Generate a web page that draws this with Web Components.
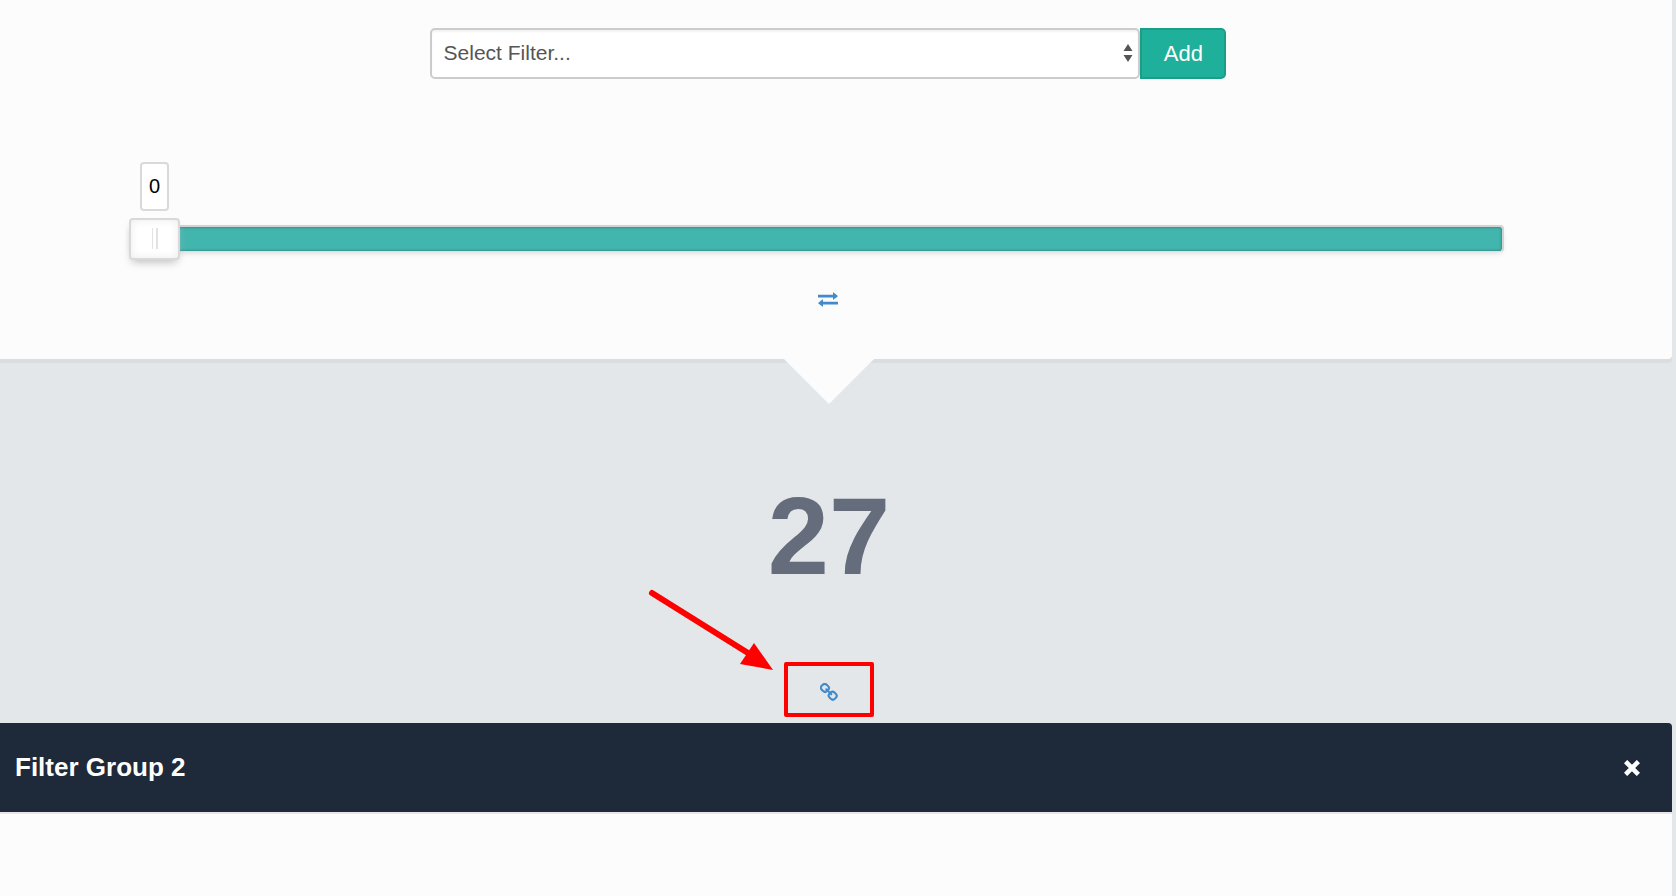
<!DOCTYPE html>
<html lang="en">
<head>
<meta charset="utf-8">
<title>Filter Group 2</title>
<style>
  body {
    margin: 0;
    padding-right: 4px;
    min-height: 100vh;
    box-sizing: border-box;
    display: flex;
    flex-direction: column;
    background: #e3e7ea;
    font-family: "Liberation Sans", Arial, sans-serif;
    color: #555;
  }

  group-body {
    flex: 1;
  }
</style>
</head>
<body>
  <filter-panel>
    <filter-picker placeholder="Select Filter..."></filter-picker>
    <value-slider value="0"></value-slider>
    <swap-link></swap-link>
  </filter-panel>
  <result-count>
    <span>27</span>
    <callout-box slot="action"><chain-link></chain-link></callout-box>
  </result-count>
  <group-header>Filter Group 2</group-header>
  <group-body></group-body>

<script>
class BaseElement extends HTMLElement {
  constructor() {
    super();
    this.attachShadow({mode: 'open'});
  }

  connectedCallback() {
    this.shadowRoot.innerHTML = this.render();
  }
}

class FilterPanel extends BaseElement {
  render() {
    return `
      <style>
        :host {
          display: flex;
          flex-direction: column;
          position: relative;
          padding: 28px 0 49px;
          background: #fcfcfc;
          border-bottom-right-radius: 4px;
          box-shadow: 0 4px 0 #dadee1;
        }

        .notch {
          position: absolute;
          top: 100%;
          left: calc(50% - 52px);
          width: 90px;
          height: 45px;
          background: #fcfcfc;
          clip-path: polygon(0 0, 100% 0, 50% 100%);
        }
      </style>
      <slot></slot>
      <div class="notch"></div>
    `;
  }
}

class FilterPicker extends BaseElement {
  render() {
    return `
      <style>
        :host {
          display: flex;
          justify-content: center;
          padding-right: 16px;
        }

        form {
          display: flex;
          width: calc(48% + 2px);
          height: 51px;
          margin: 0;
        }

        .field {
          display: flex;
          flex: 1;
          position: relative;
        }

        select {
          appearance: none;
          flex: 1;
          min-width: 0;
          margin: 0;
          padding: 0 32px 3px 12px;
          border: 2px solid #ccc;
          border-radius: 5px;
          background: #fff;
          box-shadow: inset 0 2px 2px rgba(0, 0, 0, 0.05);
          color: #555;
          font-family: inherit;
          font-size: 21px;
        }

        svg {
          position: absolute;
          top: 15px;
          right: 7px;
          pointer-events: none;
        }

        button {
          width: 86px;
          padding: 0;
          border: 2px solid #1a9e87;
          border-radius: 0 5px 5px 0;
          background: #1eb09a;
          color: #fff;
          font-family: inherit;
          font-size: 22px;
          cursor: pointer;
        }
      </style>
      <form onsubmit="return false">
        <div class="field">
          <select aria-label="Filter">
            <option>${this.getAttribute('placeholder')}</option>
          </select>
          <svg width="10" height="20" fill="#555" aria-hidden="true">
            <path d="M5 1L9.5 8H.5ZM.5 12H9.5L5 19Z"/>
          </svg>
        </div>
        <button type="submit">Add</button>
      </form>
    `;
  }
}

class ValueSlider extends BaseElement {
  render() {
    return `
      <style>
        :host {
          display: flex;
          flex-direction: column;
          align-items: flex-start;
          gap: 6px;
          padding: 83px 168px 0 129px;
        }

        output {
          box-sizing: border-box;
          min-width: 29px;
          margin-left: 11px;
          padding: 0 6px;
          border: 2px solid #d9d9d9;
          border-radius: 4px;
          background: #fff;
          color: #000;
          font-size: 20px;
          line-height: 45px;
          text-align: center;
        }

        input {
          appearance: none;
          display: block;
          width: 100%;
          height: 42px;
          margin: 0;
          background: none;
        }

        input::-webkit-slider-runnable-track {
          box-sizing: border-box;
          height: 27px;
          border: 2px solid #d3d3d3;
          border-bottom: 1px solid #d9e3e2;
          border-radius: 4px;
          background: #42b5ae;
          background-clip: padding-box;
          box-shadow: inset 0 0 3px rgba(0, 0, 0, 0.4), 0 3px 6px -3px #ccc;
        }

        input::-webkit-slider-thumb {
          appearance: none;
          box-sizing: border-box;
          width: 51px;
          height: 42px;
          margin: -9px 0 0 -2px;
          border: 2px solid #d9d9d9;
          border-radius: 4px;
          background:
            linear-gradient(#e3e3e3, #e3e3e3) 21px center / 1px 21px no-repeat,
            linear-gradient(#e3e3e3, #e3e3e3) 25px center / 2px 21px no-repeat,
            #fff;
          box-shadow: inset 0 0 8px #ebebeb, 0 5px 9px -3px #bbb;
          cursor: pointer;
        }
      </style>
      <output for="range">${this.getAttribute('value')}</output>
      <input id="range" type="range" min="0" max="100" aria-label="Value" value="${this.getAttribute('value')}">
    `;
  }

  connectedCallback() {
    super.connectedCallback();
    const input = this.shadowRoot.querySelector('input');
    input.addEventListener('input', () => {
      this.shadowRoot.querySelector('output').textContent = input.value;
    });
  }
}

class SwapLink extends BaseElement {
  render() {
    return `
      <style>
        :host {
          display: flex;
          justify-content: center;
          padding: 33px 16px 0 0;
        }

        a, svg {
          display: block;
        }
      </style>
      <a href="#" aria-label="Swap">
        <svg width="20" height="18" fill="#428bca">
          <path d="M0 2.8H15V.8Q15 .2 15.6 .6L19.6 3.7Q20 4.1 19.6 4.5L15.6 7.6Q15 8 15 7.4V5.4H0ZM20 9.8H5V7.8Q5 7.2 4.4 7.6L.4 10.7Q0 11.1 .4 11.5L4.4 14.6Q5 15 5 14.4V12.4H20Z"/>
        </svg>
      </a>
    `;
  }
}

class ResultCount extends BaseElement {
  render() {
    return `
      <style>
        :host {
          display: flex;
          flex-direction: column;
          align-items: center;
          padding: 114px 14px 6px 0;
          color: #656d7d;
        }

        .number {
          margin-bottom: 63px;
          font-size: 110px;
          font-weight: bold;
          line-height: 126px;
        }
      </style>
      <div class="number"><slot></slot></div>
      <slot name="action"></slot>
    `;
  }
}

class CalloutBox extends BaseElement {
  render() {
    return `
      <style>
        :host {
          display: block;
          position: relative;
        }

        .frame {
          display: flex;
          align-items: center;
          justify-content: center;
          box-sizing: border-box;
          width: 90px;
          height: 55px;
          padding-top: 5px;
          border: 4px solid #f00;
          border-radius: 2px;
        }

        svg {
          position: absolute;
          top: -82px;
          left: -144px;
        }
      </style>
      <div class="frame"><slot></slot></div>
      <svg width="140" height="100" aria-hidden="true">
        <path d="M12 13L108 73" stroke="#f00" stroke-width="6" stroke-linecap="round"/>
        <path d="M114 63L133 90L100 84Z" fill="#f00"/>
      </svg>
    `;
  }
}

class ChainLink extends BaseElement {
  render() {
    return `
      <style>
        :host, a, svg {
          display: block;
        }
      </style>
      <a href="#" aria-label="Link groups">
        <svg width="18" height="18" fill="none" stroke="#428bca" stroke-width="2.1">
          <rect x="-3.7" y="-3.5" width="7.4" height="7" rx="2.7" transform="translate(4.9 4.9) rotate(45)"/>
          <rect x="-3.7" y="-3.5" width="7.4" height="7" rx="2.7" transform="translate(12.7 12.7) rotate(45)"/>
          <path d="M6.3 6.3L11.3 11.3" stroke-linecap="round"/>
        </svg>
      </a>
    `;
  }
}

class GroupHeader extends BaseElement {
  render() {
    return `
      <style>
        :host {
          display: flex;
          align-items: center;
          justify-content: space-between;
          padding: 0 32px 0 15px;
          border-top-right-radius: 4px;
          background: #1e2939;
          color: #fff;
        }

        h2 {
          margin: 0;
          font-size: 26px;
          font-weight: bold;
          line-height: 89px;
        }

        button {
          display: block;
          padding: 0;
          border: 0;
          background: none;
          cursor: pointer;
        }

        svg {
          display: block;
        }
      </style>
      <h2><slot></slot></h2>
      <button type="button" aria-label="Remove group">
        <svg width="16" height="16">
          <path d="M3.2 3.2L12.8 12.8M12.8 3.2L3.2 12.8" stroke="#fff" stroke-width="4.6" stroke-linecap="square"/>
        </svg>
      </button>
    `;
  }
}

class GroupBody extends BaseElement {
  render() {
    return `
      <style>
        :host {
          display: block;
          min-height: 80px;
          border-top: 2px solid #e7e7ea;
          background: #fcfcfc;
        }
      </style>
      <slot></slot>
    `;
  }
}

customElements.define('filter-panel', FilterPanel);
customElements.define('filter-picker', FilterPicker);
customElements.define('value-slider', ValueSlider);
customElements.define('swap-link', SwapLink);
customElements.define('result-count', ResultCount);
customElements.define('callout-box', CalloutBox);
customElements.define('chain-link', ChainLink);
customElements.define('group-header', GroupHeader);
customElements.define('group-body', GroupBody);
</script>
</body>
</html>
